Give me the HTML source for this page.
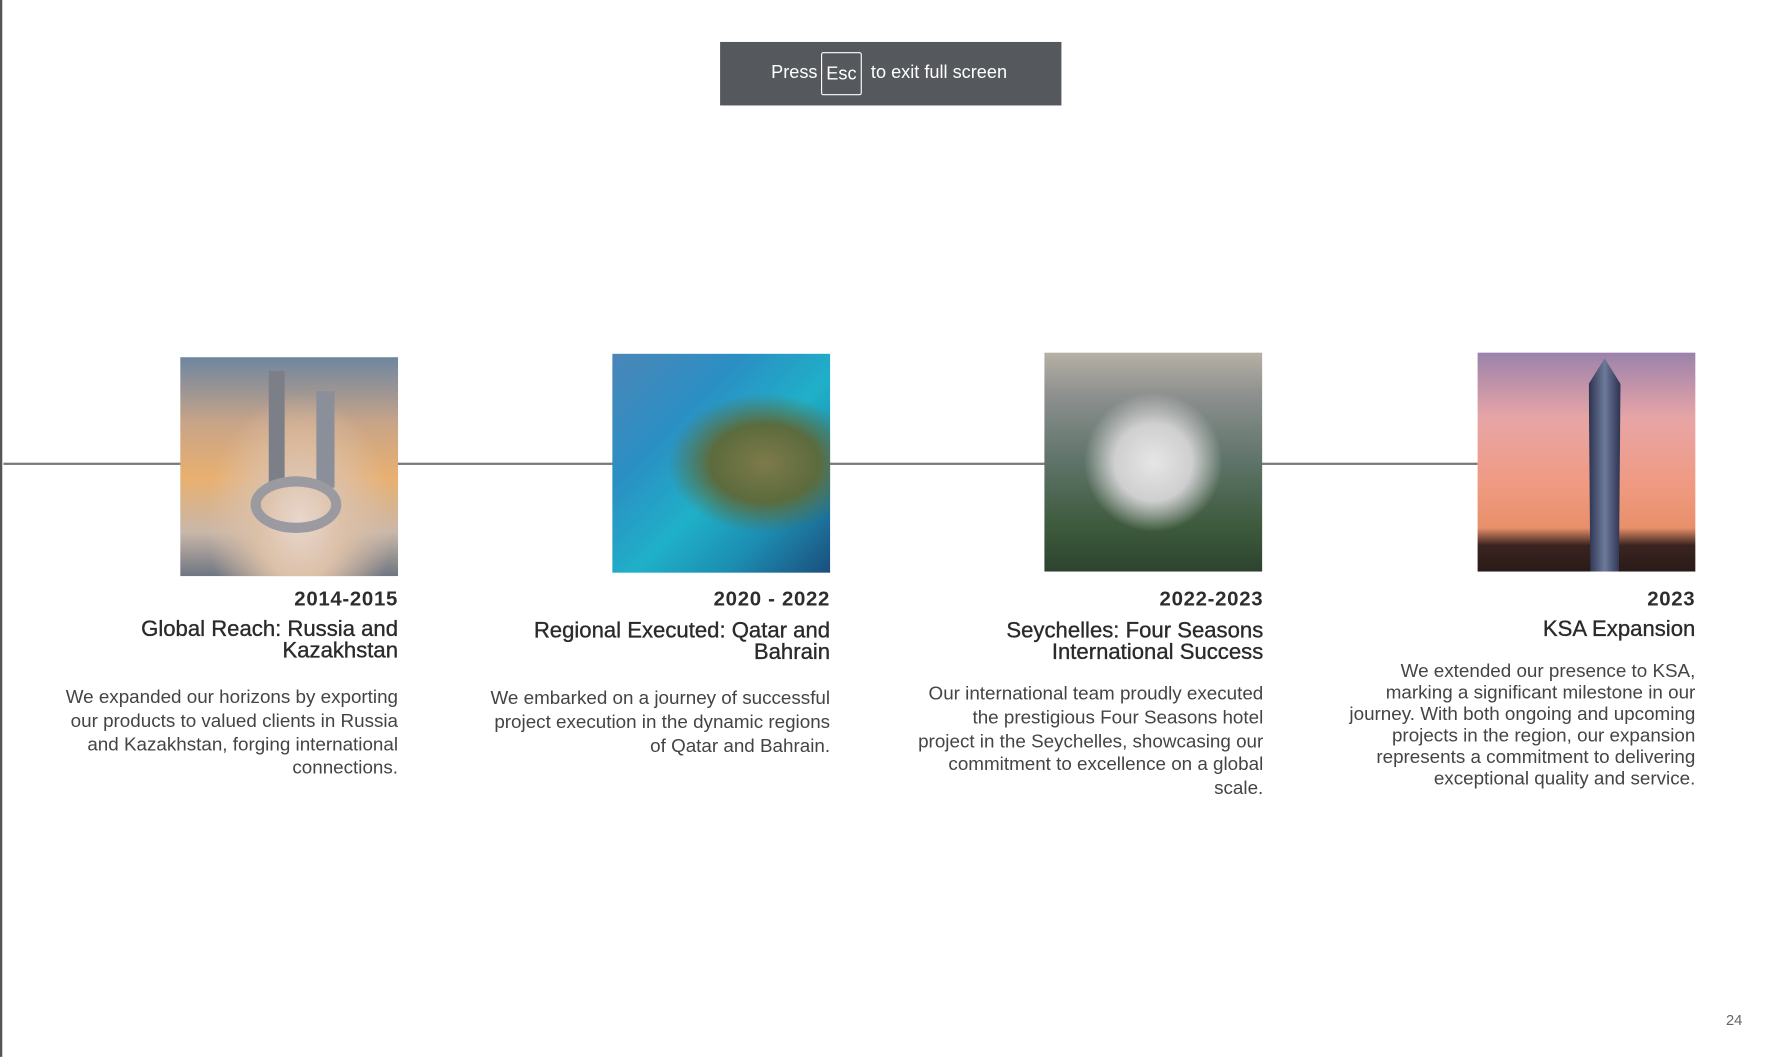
<!DOCTYPE html>
<html><head><meta charset="utf-8"><style>
html,body{margin:0;padding:0;background:#fff;width:1777px;height:1056px;overflow:hidden}
#s{position:absolute;left:0;top:0;width:1567px;height:932px;transform:scale(1.134);transform-origin:0 0;font-family:"Liberation Sans",sans-serif;color:#2d2d2d}
.a{position:absolute}
.bar{left:0;top:0;width:2px;height:932px;background:#555}
.line{left:3px;top:408px;width:1300px;height:2px;background:#7a7a7a}
.ban{left:635px;top:37px;width:301px;height:56px;background:#55585c;color:#fff;font-size:16px}
.img{width:192px;height:193px}
.t{text-align:right;width:400px}
.y{font-weight:bold;font-size:18px;letter-spacing:0.6px}
.h{font-size:19.5px;line-height:18.5px;color:#2a2a2a;-webkit-text-stroke:0.3px #2a2a2a}
.p{font-size:16.6px;line-height:20.8px;color:#444}
</style></head><body><div id="s">
<div class="a bar"></div>
<div class="a line"></div>
<div class="a ban">
<span class="a" style="left:45px;top:19px">Press</span>
<span class="a" style="left:89px;top:9px;width:36px;height:38px;border:1px solid #fff;border-radius:2px;box-sizing:border-box;text-align:center;line-height:38px">Esc</span>
<span class="a" style="left:133px;top:19px">to exit full screen</span>
</div>
<div class="a img" style="left:159px;top:315px;background:radial-gradient(ellipse at 55% 75%,#e8d7cc 0,#dcc0a8 25%,transparent 55%),linear-gradient(180deg,#6e86a0 0%,#c8a488 30%,#e9b070 55%,#c9b7a9 80%,#6f7682 100%)">
<div class="a" style="left:78px;top:12px;width:14px;height:100px;background:#7d7f88"></div>
<div class="a" style="left:120px;top:30px;width:16px;height:85px;background:#8a8f99"></div>
<div class="a" style="left:62px;top:105px;width:80px;height:50px;border:9px solid #9a9aa0;border-radius:50%;box-sizing:border-box"></div>
</div>
<div class="a img" style="left:540px;top:312px;background:radial-gradient(ellipse at 70% 50%,#7d7a4a 0,#5c6b3d 25%,transparent 45%),linear-gradient(135deg,#4b86b8 0%,#2b8fc4 30%,#1fb0c8 55%,#1c8fb3 75%,#1b4e7d 100%)"></div>
<div class="a img" style="left:921px;top:311px;background:radial-gradient(ellipse at 50% 50%,#e6e6e6 0,#cfcfcf 25%,transparent 45%),linear-gradient(180deg,#b7b0a5 0%,#8c8f8e 20%,#5e7369 50%,#3d5a3c 80%,#2d4330 100%)"></div>
<div class="a img" style="left:1303px;top:311px;background:linear-gradient(180deg,#9b82ac 0%,#e8a5a6 30%,#f09a82 60%,#e8906a 80%,#3a2420 88%,#2a1a18 100%)">
<div class="a" style="left:98px;top:5px;width:28px;height:188px;background:linear-gradient(90deg,#2c3350,#6d7a9a,#2c3350);clip-path:polygon(50% 0,100% 12%,95% 100%,5% 100%,0 12%)"></div>
</div>
<div class="a t" style="left:-49px;top:518px"><div class="y">2014-2015</div><div class="h" style="margin-top:7px">Global Reach: Russia and<br>Kazakhstan</div><div class="p" style="margin-top:22px">We expanded our horizons by exporting<br>our products to valued clients in Russia<br>and Kazakhstan, forging international<br>connections.</div></div>
<div class="a t" style="left:332px;top:518px"><div class="y">2020 - 2022</div><div class="h" style="margin-top:8px">Regional Executed: Qatar and<br>Bahrain</div><div class="p" style="margin-top:22px">We embarked on a journey of successful<br>project execution in the dynamic regions<br>of Qatar and Bahrain.</div></div>
<div class="a t" style="left:714px;top:518px"><div class="y">2022-2023</div><div class="h" style="margin-top:8px">Seychelles: Four Seasons<br>International Success</div><div class="p" style="margin-top:18px">Our international team proudly executed<br>the prestigious Four Seasons hotel<br>project in the Seychelles, showcasing our<br>commitment to excellence on a global<br>scale.</div></div>
<div class="a t" style="left:1095px;top:518px"><div class="y">2023</div><div class="h" style="margin-top:7px">KSA Expansion</div><div class="p" style="margin-top:17px;line-height:19px">We extended our presence to KSA,<br>marking a significant milestone in our<br>journey. With both ongoing and upcoming<br>projects in the region, our expansion<br>represents a commitment to delivering<br>exceptional quality and service.</div></div>
<div class="a" style="left:1522px;top:892px;font-size:13px;color:#666">24</div>
</div></body></html>
